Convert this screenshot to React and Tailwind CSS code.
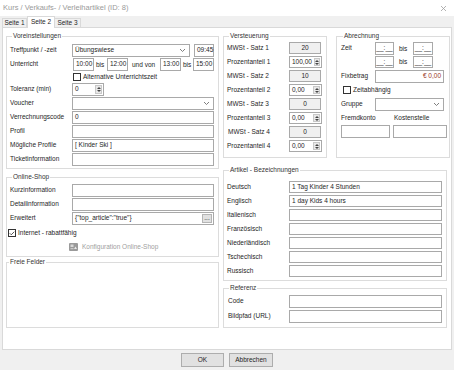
import { Check } from 'lucide-react'

function Field({ className = '', children }) {
  return (
    <div className={`h-full border border-[#a9a9a9] bg-white flex items-center px-[2px] leading-none ${className}`}>
      {children}
    </div>
  )
}

function Select({ className = '', value }) {
  return (
    <Field className={`justify-between pr-[1px] ${className}`}>
      <span>{value}</span>
      <svg width="7" height="5" viewBox="0 0 7 5" className="mr-[2px]">
        <polyline points="1,1 3.5,3.5 6,1" fill="none" stroke="#707070" strokeWidth="0.9" />
      </svg>
    </Field>
  )
}

function Spin({ className = '', value }) {
  return (
    <div className={`h-full border border-[#a9a9a9] bg-white flex items-stretch leading-none ${className}`}>
      <span className="flex-1 flex items-center px-[2px]">{value}</span>
      <div className="w-[7px] my-[1px] mr-[1px] bg-[#e8e8e8] border border-[#c8c8c8] flex flex-col items-center justify-around">
        <svg width="4" height="2" viewBox="0 0 4 2"><polygon points="0,2 2,0 4,2" fill="#444" /></svg>
        <svg width="4" height="2" viewBox="0 0 4 2"><polygon points="0,0 4,0 2,2" fill="#444" /></svg>
      </div>
    </div>
  )
}

function CheckBox({ checked, label, className = '' }) {
  return (
    <div className={`flex items-center gap-[2px] ${className}`}>
      <div className="w-[8px] h-[8px] border border-[#333] bg-white flex items-center justify-center">
        {checked && <Check size={7} strokeWidth={3} color="#222" />}
      </div>
      <span className="leading-none">{label}</span>
    </div>
  )
}

function Group({ title, className = '', children }) {
  return (
    <fieldset className={`border border-[#dcdcdc] min-w-0 ${className}`}>
      <legend className="ml-[2px] px-[1px] leading-[8px] text-[#333]">{title}</legend>
      {children}
    </fieldset>
  )
}

function Row({ label, labelW = 'w-[62px]', h = 'h-[13px]', children }) {
  return (
    <div className={`flex items-center ${h}`}>
      <span className={`${labelW} shrink-0 leading-none`}>{label}</span>
      {children}
    </div>
  )
}

export default function App() {
  const languages = [
    ['Deutsch', '1 Tag Kinder 4 Stunden'],
    ['Englisch', '1 day Kids 4 hours'],
    ['Italienisch', ''],
    ['Französisch', ''],
    ['Niederländisch', ''],
    ['Tschechisch', ''],
    ['Russisch', ''],
  ]

  return (
    <div className="w-[454px] h-[370px] bg-[#f0f0f0] flex flex-col overflow-hidden text-[6.5px] text-[#1e1e1e] font-['Liberation_Sans',Arial,sans-serif]">
      {/* Title bar */}
      <div className="h-[16px] bg-white flex items-center justify-between pl-[3px] pr-[7px] shrink-0">
        <span className="text-[7.5px] text-[#9a9a9a]">Kurs / Verkaufs- / Verleihartikel (ID: 8)</span>
        <svg width="7" height="7" viewBox="0 0 7 7">
          <path d="M1 1 L6 6 M6 1 L1 6" stroke="#a0a0a0" strokeWidth="0.8" />
        </svg>
      </div>

      {/* Tabs */}
      <div className="h-[11px] flex items-end pl-[2px] shrink-0 relative z-10">
        <div className="h-[9px] w-[25px] border border-b-0 border-[#d9d9d9] bg-[#f0f0f0] flex items-center justify-center leading-none">Seite 1</div>
        <div className="h-[12px] w-[28px] -mb-[1px] border border-b-0 border-[#d9d9d9] bg-white flex items-center justify-center leading-none">Seite 2</div>
        <div className="h-[9px] w-[26px] border border-b-0 border-l-0 border-[#d9d9d9] bg-[#f0f0f0] flex items-center justify-center leading-none">Seite 3</div>
      </div>

      {/* Panel */}
      <div className="mx-[2px] h-[323px] bg-white border border-[#d9d9d9] pt-[4px] pl-[3px] flex gap-[4px] shrink-0">
        {/* Left column */}
        <div className="w-[213px] flex flex-col">
          <Group title="Voreinstellungen" className="h-[137px] pt-[4px] pl-[3px] pr-[4px]">
            <div className="flex flex-col gap-[1px]">
              <Row label="Treffpunkt / -zeit">
                <Select className="w-[118px]" value="Übungswiese" />
                <Field className="w-[20px] ml-[4px]">09:45</Field>
              </Row>
              <Row label="Unterricht">
                <Field className="w-[21px] ml-[1px]">10:00</Field>
                <span className="w-[13px] pl-[2px]">bis</span>
                <Field className="w-[21px]">12:00</Field>
                <span className="w-[32px] pl-[4px]">und von</span>
                <Field className="w-[21px]">13:00</Field>
                <span className="w-[12px] pl-[2px]">bis</span>
                <Field className="w-[21px]">15:00</Field>
              </Row>
              <div className="h-[10px] flex items-center pl-[63px]">
                <CheckBox label="Alternative Unterrichtszeit" />
              </div>
              <Row label="Toleranz (min)">
                <Spin className="w-[32px]" value="0" />
              </Row>
              <Row label="Voucher">
                <Select className="flex-1" value="" />
              </Row>
              <Row label="Verrechnungscode">
                <Field className="flex-1">0</Field>
              </Row>
              <Row label="Profil">
                <Field className="flex-1" />
              </Row>
              <Row label="Mögliche Profile">
                <Field className="flex-1">[ Kinder Ski ]</Field>
              </Row>
              <Row label="Ticketinformation">
                <Field className="flex-1" />
              </Row>
            </div>
          </Group>

          <Group title="Online-Shop" className="h-[84px] mt-[4px] pt-[3px] pl-[3px] pr-[4px]">
            <div className="flex flex-col gap-[1px]">
              <Row label="Kurzinformation">
                <Field className="flex-1" />
              </Row>
              <Row label="Detailinformation">
                <Field className="flex-1" />
              </Row>
              <Row label="Erweitert">
                <Field className="flex-1 justify-between pr-[1px]">
                  <span>{'{"top_article":"true"}'}</span>
                  <span className="h-[9px] w-[10px] bg-[#e1e1e1] border border-[#b5b5b5] flex items-center justify-center leading-none">...</span>
                </Field>
              </Row>
            </div>
            <CheckBox checked label="Internet - rabattfähig" className="mt-[4px] -ml-[2px]" />
            <div className="flex items-center gap-[4px] mt-[6px] pl-[59px] text-[#a0a0a0]">
              <svg width="9" height="8" viewBox="0 0 9 8">
                <rect x="0" y="0" width="9" height="8" rx="1" fill="#9a9a9a" />
                <rect x="1.5" y="1.5" width="3" height="2.5" fill="#d8d8d8" />
                <path d="M5 6 L6.5 3.5 L8 6 Z" fill="#e8e8e8" />
                <rect x="1.5" y="5" width="3" height="1.2" fill="#c8c8c8" />
              </svg>
              <span className="leading-none">Konfiguration Online-Shop</span>
            </div>
          </Group>

          <Group title="Freie Felder" className="h-[70px] mt-[1px]" />
        </div>

        {/* Right part */}
        <div className="w-[227px] flex flex-col">
          <div className="flex gap-[9px]">
            <Group title="Versteuerung" className="w-[104px] h-[126px] pt-[2px] pl-[3px]">
              <div className="flex flex-col gap-[2px]">
                {[
                  ['MWSt - Satz 1', '20', '100,00'],
                  ['MWSt - Satz 2', '10', '0,00'],
                  ['MWSt - Satz 3', '0', '0,00'],
                  ['MWSt - Satz 4', '0', '0,00'],
                ].map(([label, rate, share], i) => (
                  <div key={label} className="flex flex-col gap-[2px]">
                    <Row label={i === 3 ? <span className="pl-[1px]">{label}</span> : label} h="h-[12px]">
                      <div className="w-[32px] h-full border border-[#a9a9a9] bg-[#f0f0f0] flex items-center justify-center leading-none">{rate}</div>
                    </Row>
                    <Row label={`Prozentanteil ${i + 1}`} h="h-[12px]">
                      <Spin className="w-[33px]" value={share} />
                    </Row>
                  </div>
                ))}
              </div>
            </Group>

            <Group title="Abrechnung" className="w-[114px] h-[126px] pt-[2px] pl-[4px] pr-[2px]">
              <div className="flex flex-col gap-[1px]">
                <Row label="Zeit" labelW="w-[34px]">
                  <Field className="w-[19px] justify-center">__:__</Field>
                  <span className="w-[19px] pl-[5px]">bis</span>
                  <Field className="w-[20px] justify-center">__:__</Field>
                </Row>
                <Row label="" labelW="w-[34px]" h="h-[12px]">
                  <Field className="w-[19px] justify-center">__:__</Field>
                  <span className="w-[19px] pl-[5px]">bis</span>
                  <Field className="w-[20px] justify-center">__:__</Field>
                </Row>
              </div>
              <div className="mt-[2px]">
                <Row label="Fixbetrag" labelW="w-[34px]" h="h-[13px]">
                  <Field className="w-[69px] justify-end bg-[#fff9d6] text-[#9a3a2a] pr-[2px]">€ 0,00</Field>
                </Row>
              </div>
              <CheckBox label="Zeitabhängig" className="mt-[3px] pl-[2px]" />
              <div className="mt-[4px]">
                <Row label="Gruppe" labelW="w-[34px]">
                  <Select className="w-[69px]" value="" />
                </Row>
              </div>
              <div className="flex mt-[4px] leading-none">
                <span className="w-[53px]">Fremdkonto</span>
                <span>Kostenstelle</span>
              </div>
              <div className="flex h-[13px] mt-[3px] gap-[3px]">
                <Field className="w-[49px]" />
                <Field className="w-[54px]" />
              </div>
            </Group>
          </div>

          <Group title="Artikel - Bezeichnungen" className="w-[224px] h-[115px] mt-[8px] pt-[7px] pl-[3px] pr-[4px]">
            <div className="flex flex-col gap-[2px]">
              {languages.map(([label, value]) => (
                <Row key={label} label={label} h="h-[12px]">
                  <Field className="flex-1">{value}</Field>
                </Row>
              ))}
            </div>
          </Group>

          <Group title="Referenz" className="w-[224px] h-[44px] mt-[3px] pt-[3px] pl-[3px] pr-[4px]">
            <div className="flex flex-col gap-[2px]">
              <Row label={<span className="pl-[1px]">Code</span>}>
                <Field className="flex-1" />
              </Row>
              <Row label={<span className="pl-[1px]">Bildpfad (URL)</span>}>
                <Field className="flex-1" />
              </Row>
            </div>
          </Group>
        </div>
      </div>

      {/* Buttons */}
      <div className="flex-1 flex items-center justify-center gap-[5px]">
        <button className="w-[43px] h-[14px] bg-[#e1e1e1] border border-[#adadad] leading-none">OK</button>
        <button className="w-[44px] h-[14px] bg-[#e1e1e1] border border-[#adadad] leading-none">Abbrechen</button>
      </div>
    </div>
  )
}
